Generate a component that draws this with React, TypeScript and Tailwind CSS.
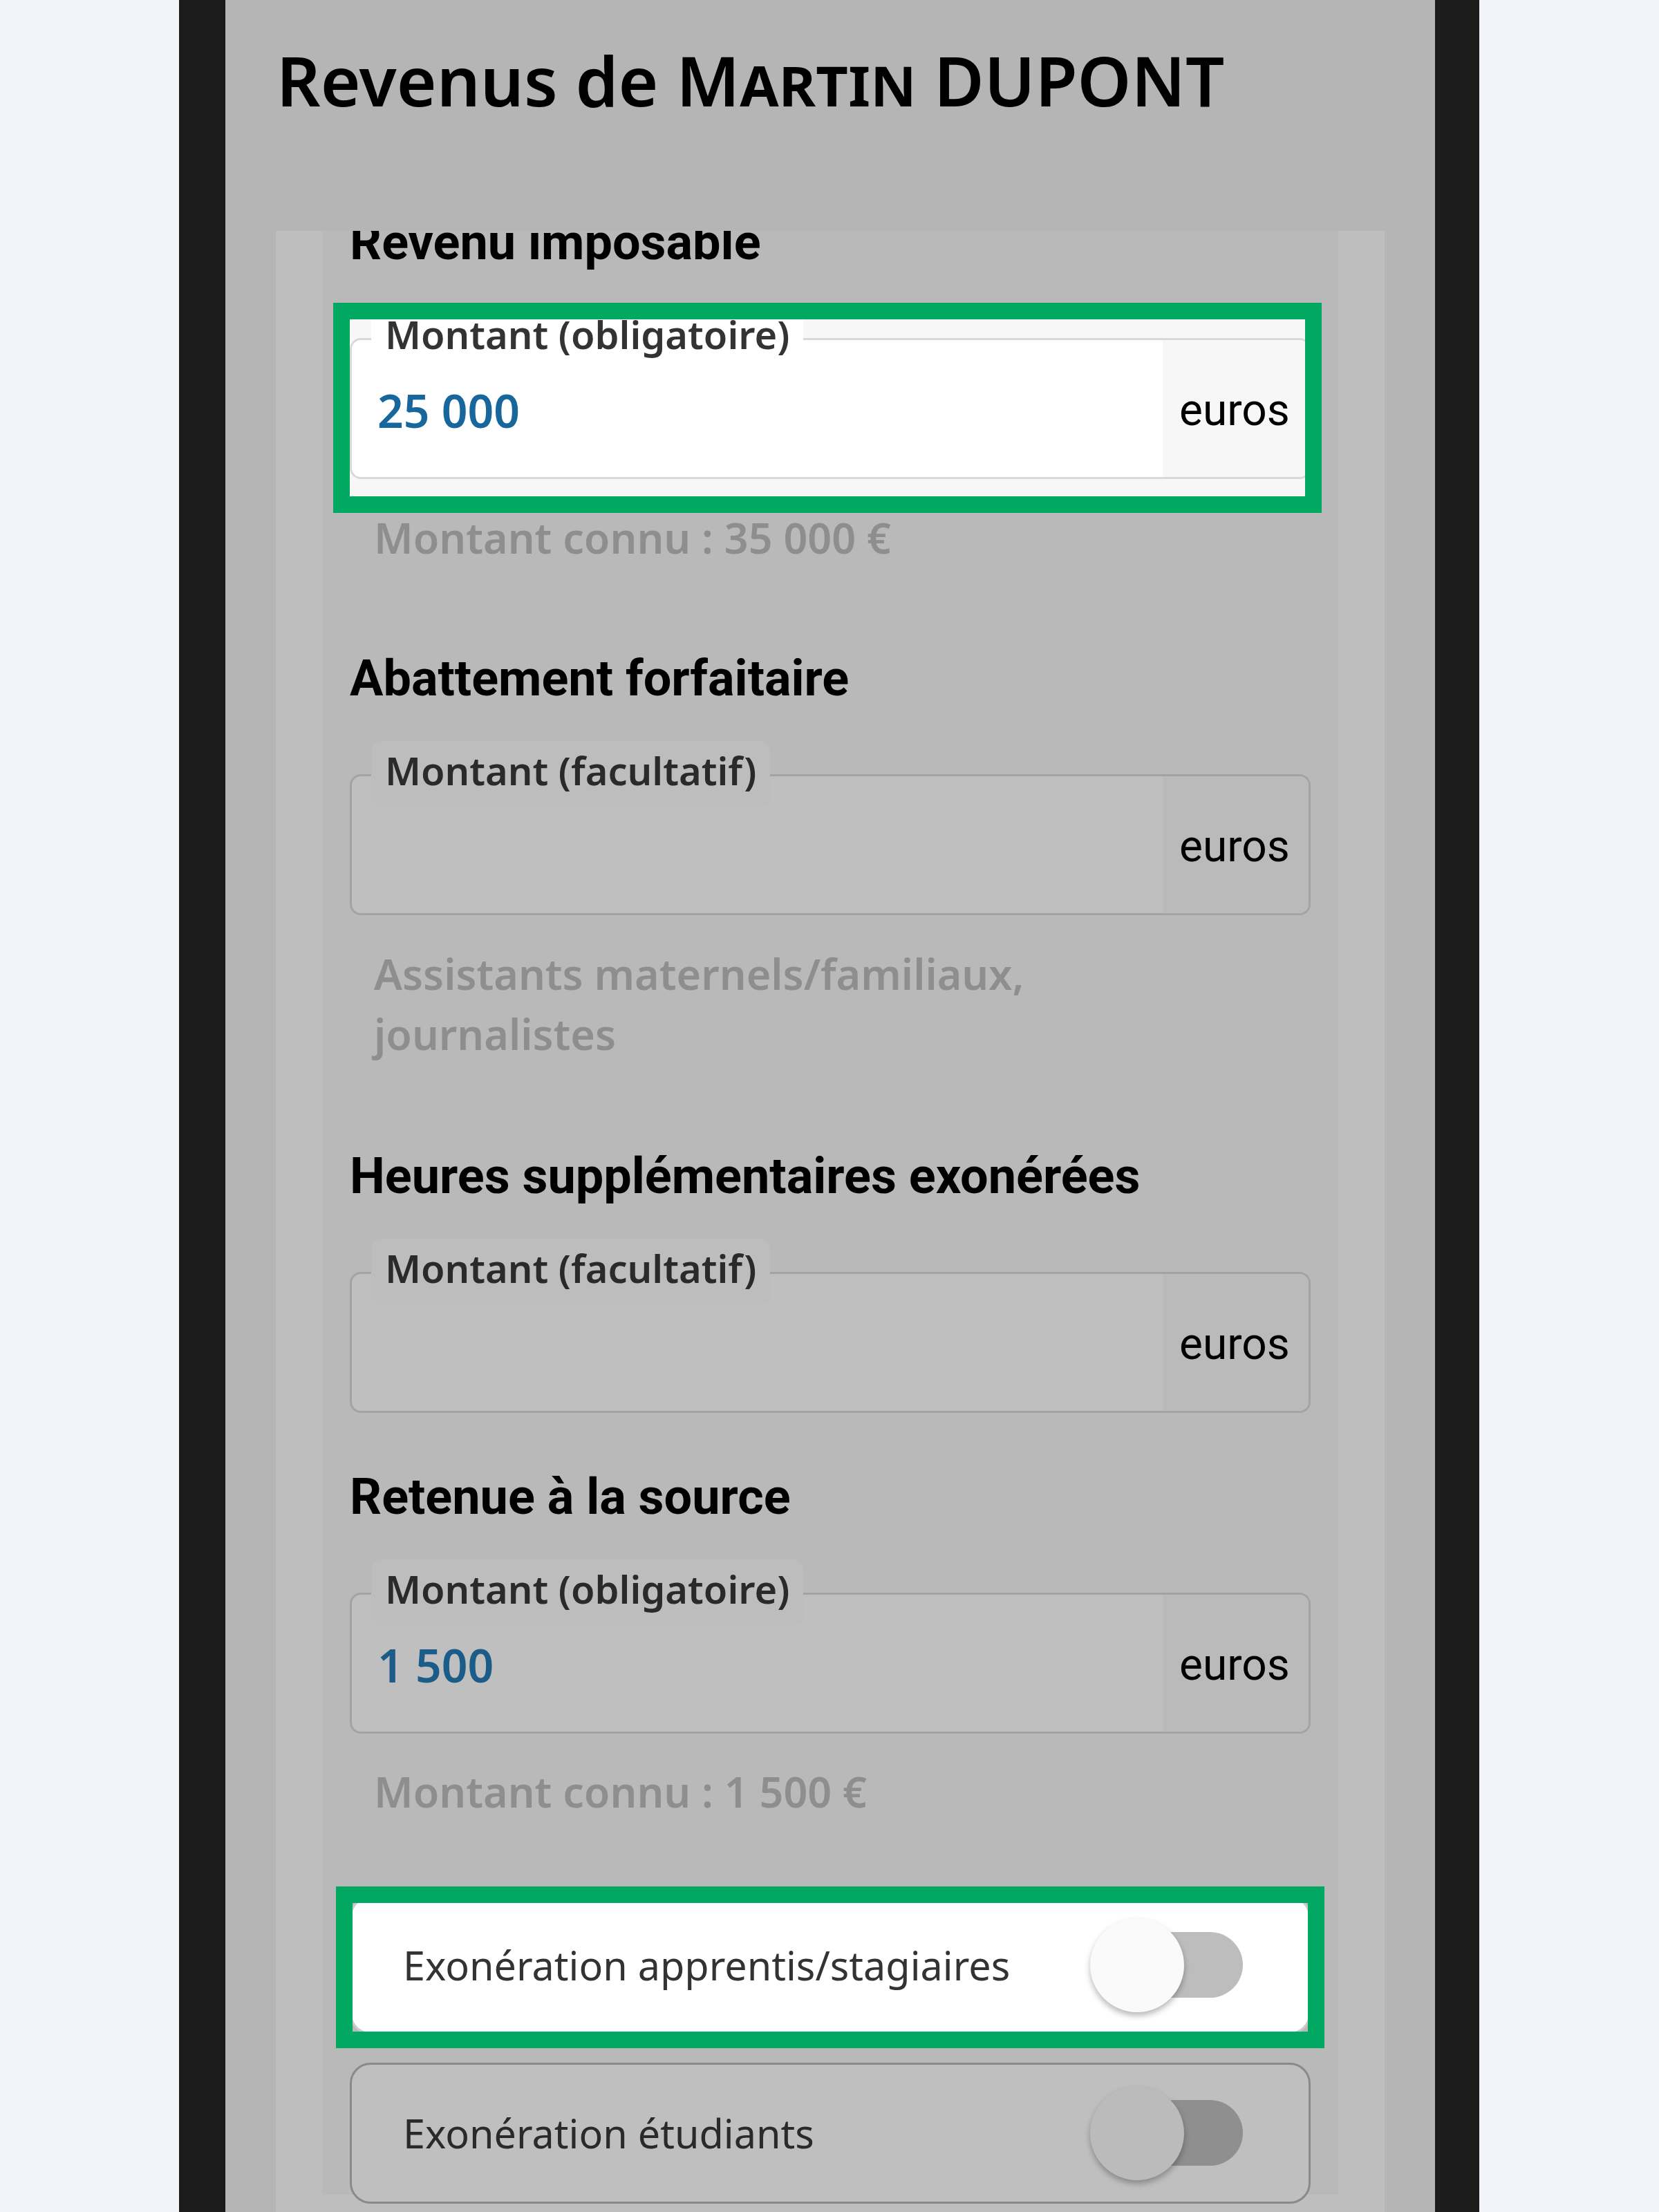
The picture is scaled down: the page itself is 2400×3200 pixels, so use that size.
import React from 'react';

const SANS = "font-['Noto_Sans','Open_Sans',sans-serif]";
const ROBOTO = "font-['Roboto','Liberation_Sans',sans-serif]";

interface AmountFieldProps {
  label: string;
  value?: string;
  active?: boolean;
}

function AmountField({ label, value, active }: AmountFieldProps) {
  return (
    <div
      className={`relative flex h-[204px] rounded-[16px] border-[3px] ${
        active ? 'border-[#d9d9d9] bg-white' : 'border-[#a3a3a3] bg-[#bfbfbf]'
      }`}
    >
      {/* Label sitting on the top border */}
      <div
        className={`absolute left-[28px] top-[-51px] h-[96px] rounded-[16px] px-[20px] ${SANS} text-[56px] font-semibold leading-[84px] ${
          active ? 'bg-white text-[#333333]' : 'bg-[#bdbdbd] text-[#2a2a2a]'
        }`}
      >
        {label}
      </div>
      <div className="flex flex-1 items-center pl-[37px] pt-[4px]">
        {value && (
          <span
            className={`${SANS} text-[66px] font-semibold ${
              active ? 'text-[#17679d]' : 'text-[#1b5c88]'
            }`}
          >
            {value}
          </span>
        )}
      </div>
      <div
        className={`flex w-[211px] items-center rounded-r-[13px] pl-[24px] pt-[6px] ${ROBOTO} text-[64px] text-black ${
          active ? 'bg-[#f7f7f7]' : 'bg-[#bababa]'
        }`}
      >
        euros
      </div>
    </div>
  );
}

function Heading({ children, className = '' }: { children: React.ReactNode; className?: string }) {
  return (
    <h2 className={`${ROBOTO} text-[72px] font-bold leading-[84px] text-black ${className}`}>
      {children}
    </h2>
  );
}

function Hint({ children, className = '' }: { children: React.ReactNode; className?: string }) {
  return (
    <p className={`pl-[35px] ${SANS} text-[61px] font-semibold leading-[87px] text-[#8e8e8e] ${className}`}>
      {children}
    </p>
  );
}

function ToggleRow({ label, active }: { label: string; active?: boolean }) {
  return (
    <div
      className={`relative flex items-center justify-between rounded-[30px] border-[3px] pl-[74px] pr-[95px] ${
        active ? 'h-[200px] border-[#cccccc] bg-white' : 'h-[204px] border-[#8a8a8a] bg-[#bfbfbf]'
      }`}
    >
      <span className={`${SANS} text-[57.5px] ${active ? 'text-[#333333]' : 'text-[#2a2a2a]'}`}>{label}</span>
      {/* Switch (off) */}
      <div className="relative h-[136px] w-[221px]">
        <div
          className={`absolute left-[20px] right-0 top-[20px] h-[95px] rounded-full ${
            active ? 'bg-[#bdbdbd]' : 'bg-[#8f8f8f]'
          }`}
        />
        <div
          className={`absolute left-0 top-0 h-[136px] w-[136px] rounded-full shadow-[0_5px_8px_rgba(0,0,0,0.28)] ${
            active ? 'bg-[#fafafa]' : 'bg-[#bbbbbb]'
          }`}
        />
      </div>
    </div>
  );
}

export default function App() {
  return (
    <div className="flex h-[3200px] w-[2400px] overflow-hidden bg-[#f2f4f9]">
      <div className="w-[259px] shrink-0" />
      <div className="flex w-[1881px] shrink-0 bg-[#1b1b1b] pl-[67px] pr-[64px]">
        <div className="flex flex-1 flex-col bg-[#b5b5b5]">
          {/* Header */}
          <div className="h-[334px] shrink-0 pl-[74px] pt-[68px]">
            <h1 className={`${SANS} text-[99px] font-semibold leading-[96px] text-black`}>
              Revenus de <span className="[font-variant-caps:small-caps]">Martin</span> DUPONT
            </h1>
          </div>

          {/* Scrolled content */}
          <div className="mx-[73px] flex-1 overflow-hidden bg-[#bebebe] px-[67px]">
            <div className="h-full bg-[#b9b9b9] px-[40px]">
              <Heading className="mt-[-25px]">Revenu imposable</Heading>

              <div className="relative mt-[96px]">
                <div className="absolute -bottom-[49px] -left-[24px] -right-[16px] -top-[51px] bg-[#f7f7f7]" />
                <AmountField label="Montant (obligatoire)" value="25 000" active />
                <div className="pointer-events-none absolute -bottom-[49px] -left-[24px] -right-[16px] -top-[51px] border-[24px] border-[#00a862]" />
              </div>
              <Hint className="mt-[41px]">Montant connu : 35 000 €</Hint>

              <Heading className="mt-[119px]">Abattement forfaitaire</Heading>
              <div className="mt-[96px]">
                <AmountField label="Montant (facultatif)" />
              </div>
              <Hint className="mt-[41px]">
                Assistants maternels/familiaux,
                <br />
                journalistes
              </Hint>

              <Heading className="mt-[121px]">Heures supplémentaires exonérées</Heading>
              <div className="mt-[96px]">
                <AmountField label="Montant (facultatif)" />
              </div>

              <Heading className="mt-[80px]">Retenue à la source</Heading>
              <div className="mt-[96px]">
                <AmountField label="Montant (obligatoire)" value="1 500" />
              </div>
              <Hint className="mt-[40px]">Montant connu : 1 500 €</Hint>

              <div className="relative mt-[108px]">
                <ToggleRow label="Exonération apprentis/stagiaires" active />
                <div className="pointer-events-none absolute -bottom-[20px] -left-[20px] -right-[20px] -top-[14px] border-[24px] border-[#00a862]" />
              </div>
              <div className="mt-[41px]">
                <ToggleRow label="Exonération étudiants" />
              </div>
            </div>
          </div>
        </div>
      </div>
    </div>
  );
}
